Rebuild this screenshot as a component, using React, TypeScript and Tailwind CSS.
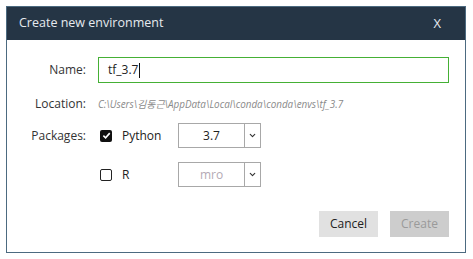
import { ChevronDown } from "lucide-react"

const font = { fontFamily: '"Open Sans", "Noto Sans CJK KR", sans-serif' }

function Checkbox({ checked }: { checked?: boolean }) {
    if (checked) {
        return (
            <div className="w-[12px] h-[12px] rounded-[2px] bg-[#111] flex items-center justify-center">
                <svg width="9" height="9" viewBox="0 0 10 10">
                    <path d="M1.5 5.2 L4 7.5 L8.6 2.4" stroke="white" strokeWidth="1.8" fill="none" />
                </svg>
            </div>
        )
    }
    return <div className="w-[12px] h-[12px] rounded-[2px] border-[1.5px] border-[#222] bg-white" />
}

function Select({ value, muted }: { value: string; muted?: boolean }) {
    return (
        <div className="w-[83px] h-[25px] border border-[#a8a8a8] flex bg-white">
            <div className={`flex-1 flex items-center justify-center text-[12px] ${muted ? "text-[#b4aab4]" : "text-[#222]"}`}>
                {value}
            </div>
            <div className="w-[16px] border-l border-[#a8a8a8] flex items-center justify-center">
                <ChevronDown className="w-[9px] h-[9px] text-[#333]" strokeWidth={3} />
            </div>
        </div>
    )
}

export default function App() {
    return (
        <div className="w-[473px] h-[259px] bg-white pt-[6px] pl-[6px]" style={font}>
            <div className="w-[460px] h-[247px] border border-[#4c6a80] flex flex-col">
                {/* Header */}
                <div className="h-[33px] bg-[#253545] flex items-center justify-between pl-[12px] pr-[24px] shrink-0">
                    <span className="text-[12.5px] text-[#e6eaee]">Create new environment</span>
                    <span className="text-[13px] text-[#e6eaee]">X</span>
                </div>

                {/* Body */}
                <div className="flex flex-col pt-[17px] pr-[16px]">
                    <div className="flex items-center h-[26px]">
                        <div className="w-[79px] text-right text-[12px] text-[#333]">Name:</div>
                        <div className="ml-[12px] flex-1 h-[26px] border border-[#45b035] flex items-center pl-[9px] text-[12px] text-[#222]">
                            tf_3.7<span className="w-px h-[15px] bg-[#111] ml-[1px]" />
                        </div>
                    </div>

                    <div className="flex items-center h-[16px] mt-[13px]">
                        <div className="w-[79px] text-right text-[12px] text-[#333]">Location:</div>
                        <div className="ml-[12px] text-[9.9px] italic text-[#8a8a8a]">
                            C:\Users\김동근\AppData\Local\conda\conda\envs\tf_3.7
                        </div>
                    </div>

                    <div className="flex mt-[11px]">
                        <div className="w-[79px] h-[25px] flex items-center justify-end text-[12px] text-[#333]">Packages:</div>
                        <div className="ml-[14px] flex flex-col gap-[14px]">
                            <div className="flex items-center h-[25px]">
                                <Checkbox checked />
                                <span className="ml-[10px] w-[56px] text-[12px] text-[#222]">Python</span>
                                <Select value="3.7" />
                            </div>
                            <div className="flex items-center h-[25px]">
                                <Checkbox />
                                <span className="ml-[10px] w-[56px] text-[12px] text-[#222]">R</span>
                                <Select value="mro" muted />
                            </div>
                        </div>
                    </div>

                    <div className="flex justify-end gap-[12px] mt-[24px]">
                        <button className="w-[59px] h-[26px] bg-[#e1e1e1] text-[12px] text-[#222]">Cancel</button>
                        <button className="w-[59px] h-[26px] bg-[#cdcdcd] text-[12px] text-[#9a9a9a]">Create</button>
                    </div>
                </div>
            </div>
        </div>
    )
}
